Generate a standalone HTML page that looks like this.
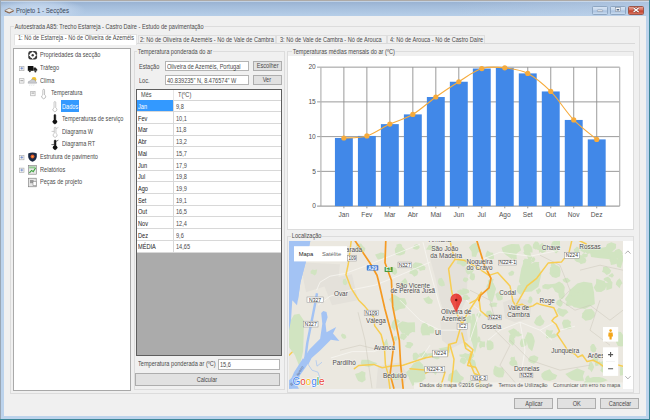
<!DOCTYPE html>
<html><head><meta charset="utf-8">
<style>
*{box-sizing:border-box;margin:0;padding:0}
html,body{width:650px;height:420px;overflow:hidden}
body{position:relative;background:#bcd3ec;font-family:"Liberation Sans",sans-serif;font-size:5.6px;color:#4a4a4a}
.a{position:absolute}
.t{position:absolute;white-space:nowrap;line-height:6px;height:6px;font-size:6.5px;transform:scaleX(.862);transform-origin:0 50%}
.frame-top{left:0;top:0;width:650px;height:16px;background:radial-gradient(48px 11px at 38px 10px,rgba(200,218,240,.95),rgba(200,218,240,.6) 60%,rgba(200,218,240,0)),linear-gradient(90deg,rgba(190,210,234,0) 70%,rgba(190,210,234,.55) 100%),linear-gradient(#94aece,#a4bddb 40%,#b6cee8)}
.client{left:4px;top:16px;width:642px;height:400px;background:#f0f0f0}
.cbtn{position:absolute;top:5.5px;height:9px;border:1px solid #8ea6c2;border-radius:1.5px;background:linear-gradient(#d7e4f3,#c4d6ec 45%,#a9c1df 55%,#c9dbef)}
.close{background:linear-gradient(#e8a08f,#d66a58 45%,#c2412c 55%,#d9735f);border-color:#9b5649}
.gb{position:absolute;border:1px solid #dcdcdc}
.gbt{position:absolute;white-space:nowrap;line-height:6px;height:6px;background:#f0f0f0;padding:0 1px;font-size:6.5px;transform:scaleX(.862);transform-origin:0 50%}
.tb{position:absolute;background:#fff;border:1px solid #b4b4b4}
.btn{position:absolute;background:#e1e1e1;border:1px solid #adadad;display:flex;align-items:center;justify-content:center;white-space:nowrap}
.btn span{display:block;font-size:6.5px;line-height:6px;height:6px;transform:scaleX(.862);position:relative;top:0.4px}
</style></head>
<body>
<!-- frame -->
<div class="a frame-top"></div>
<div class="a" style="left:0;top:0;width:650px;height:1px;background:#aeaaa6"></div>
<div class="a" style="left:1px;top:1px;width:648px;height:1px;background:rgba(225,235,245,.55)"></div>
<div class="a" style="left:0;top:0;width:1px;height:420px;background:#9aa7b5"></div>
<div class="a" style="left:649px;top:0;width:1px;height:420px;background:#3b8596"></div>
<div class="a" style="left:0;top:419px;width:650px;height:1px;background:#3b8596"></div>
<div class="a client"></div>

<!-- title -->
<svg class="a" style="left:4px;top:7px" width="11" height="8" viewBox="4 7 11 8">
  <path d="M4.8 10.4 L9.2 8.2 L13.6 10.4 L13.6 11.6 L9.2 13.6 L4.8 11.6Z" fill="#8a5530"/>
  <path d="M4.8 10.4 L9.2 8.2 L13.6 10.4 L9.2 12.5Z" fill="#e9e6e2" stroke="#6f6a66" stroke-width="0.45"/>
</svg>
<div class="t" style="left:15.5px;top:7.8px;font-size:7.05px;color:#3a4759">Projeto 1 - Secções</div>
<div class="cbtn" style="left:591.7px;width:16.4px"></div>
<div class="cbtn" style="left:610px;width:16px"></div>
<div class="cbtn close" style="left:627.9px;width:16.4px"></div>
<svg class="a" style="left:590px;top:4px" width="56" height="12" viewBox="590 4 56 12">
 <rect x="597.3" y="9.9" width="5.4" height="1.7" rx="0.5" fill="#f4f4f4" stroke="#6e7f94" stroke-width="0.5"/>
 <rect x="615.3" y="7.6" width="5.2" height="4" fill="#f4f4f4" stroke="#6e7f94" stroke-width="0.5"/>
 <rect x="616.6" y="9" width="2.6" height="1.5" fill="#4f6a8c"/>
 <path d="M633.6 7.9 L638.6 12.1 M638.6 7.9 L633.6 12.1" stroke="#7a3a30" stroke-width="2.2"/>
 <path d="M633.6 7.9 L638.6 12.1 M638.6 7.9 L633.6 12.1" stroke="#fff" stroke-width="1.3"/>
</svg>

<!-- outer group -->
<div class="gb" style="left:10.3px;top:26px;width:629.7px;height:367.9px"></div>
<div class="gbt" style="left:14.4px;top:23.5px">Autoestrada A85: Trecho Estarreja - Castro Daire - Estudo de pavimentação</div>

<!-- tabs -->
<div class="a" style="left:14px;top:43.1px;width:620.8px;height:1px;background:#d9d9d9"></div>
<div class="a" style="left:137.8px;top:34.5px;width:138.5px;height:8.8px;border:1px solid #dedede;border-bottom:none;background:#f0f0f0"></div>
<div class="a" style="left:276.3px;top:34.5px;width:110.7px;height:8.8px;border:1px solid #dedede;border-bottom:none;background:#f0f0f0"></div>
<div class="a" style="left:387px;top:34.5px;width:98.3px;height:8.8px;border:1px solid #dedede;border-bottom:none;background:#f0f0f0"></div>
<div class="a" style="left:13.9px;top:33.5px;width:123.3px;height:11.2px;border:1px solid #e4e4e4;border-bottom:none;background:#fff"></div>
<div class="t" style="left:18.2px;top:35.4px">1: Nó de Estarreja - Nó de Oliveira de Azeméis</div>
<div class="t" style="left:139.8px;top:36.6px">2: Nó de Oliveira de Azeméis - Nó de Vale de Cambra</div>
<div class="t" style="left:280px;top:36.6px">3: Nó de Vale de Cambra - Nó de Arouca</div>
<div class="t" style="left:389.7px;top:36.6px">4: Nó de Arouca - Nó de Castro Daire</div>

<!-- tree -->
<div class="a" style="left:13.1px;top:47.7px;width:117.7px;height:343.2px;background:#fff;border:1px solid #a9a9a9"></div>
<!-- tree items -->
<svg class="a" style="left:0;top:0" width="131" height="200" viewBox="0 0 131 200">
 <defs>
  <g id="exp"><rect x="0.5" y="0.5" width="4.4" height="4.4" fill="#f4f4f4" stroke="#a8a8a8" stroke-width="0.6"/></g>
 </defs>
 <!-- gear -->
 <rect x="28.3" y="51" width="8.8" height="8.5" rx="2.3" fill="#3a3a3a"/>
 <circle cx="32.7" cy="55.25" r="2.9" fill="#fff"/>
 <circle cx="32.7" cy="55.25" r="1.2" fill="#3a3a3a"/>
 <g fill="#fff"><rect x="32.1" y="51.6" width="1.2" height="1.5"/><rect x="32.1" y="57.4" width="1.2" height="1.5"/><rect x="29" y="54.65" width="1.5" height="1.2"/><rect x="34.9" y="54.65" width="1.5" height="1.2"/></g>
 <!-- Trafego -->
 <use href="#exp" x="19.1" y="65.8"/>
 <path d="M20.4 68.3h2.8M21.8 66.9v2.8" stroke="#4a6bbf" stroke-width="0.6"/>
 <rect x="27.8" y="66" width="5.6" height="4.8" fill="#111"/>
 <path d="M33.4 67.6h2.2l1.6 2v1.2h-3.8z" fill="#222"/>
 <circle cx="29.8" cy="71.2" r="1" fill="#333"/><circle cx="35.4" cy="71.4" r="1" fill="#333"/>
 <!-- Clima -->
 <use href="#exp" x="19.1" y="78.2"/>
 <path d="M20.4 80.7h2.8" stroke="#6a6a6a" stroke-width="0.6"/>
 <circle cx="34" cy="79.5" r="2.4" fill="#f2c22e"/>
 <path d="M28 83.2q0-2.4 2.4-2.4q0.8-2 3-1.4q2.4 0.2 2.4 2.4q1.2 0.4 0.8 1.4z" fill="#c9cbd0" stroke="#8c8e93" stroke-width="0.4"/>
 <path d="M30 84.5l-0.3 1M32 84.5l-0.3 1M34 84.5l-0.3 1" stroke="#9aa" stroke-width="0.4"/>
 <!-- Temperatura -->
 <use href="#exp" x="30.2" y="90.9"/>
 <path d="M31.5 93.1h2.8" stroke="#6a6a6a" stroke-width="0.6"/>
 <path d="M42.85 90.15 a0.85 0.85 0 0 1 1.7 0 V94.80 a2 2 0 1 1 -1.7 0 Z" fill="#fff" stroke="#8c8c8c" stroke-width="0.55"/>
 <path d="M54.05 102.45 a0.85 0.85 0 0 1 1.7 0 V107.80 a2 2 0 1 1 -1.7 0 Z" fill="#fff" stroke="#9a9a9a" stroke-width="0.55"/>
 <path d="M54.05 115.25 a0.85 0.85 0 0 1 1.7 0 V120.00 a2 2 0 1 1 -1.7 0 Z" fill="#111" stroke="#111" stroke-width="0.55"/>
 <path d="M54.25 128.05 a0.85 0.85 0 0 1 1.7 0 V133.40 a2 2 0 1 1 -1.7 0 Z" fill="#fff" stroke="#9a9a9a" stroke-width="0.55"/>
 <path d="M51.6 131.4h2.6M56 128.6l2.4-1.2" stroke="#9a9a9a" stroke-width="0.5"/>
 <path d="M54.25 140.85 a0.85 0.85 0 0 1 1.7 0 V145.80 a2 2 0 1 1 -1.7 0 Z" fill="#111" stroke="#111" stroke-width="0.55"/>
 <path d="M51.4 144.6h2.8M56 141.4l2.4-1.2" stroke="#111" stroke-width="0.6"/>
 <!-- Estrutura -->
 <use href="#exp" x="19.1" y="154.9"/>
 <path d="M20.4 157.4h2.8M21.8 156v2.8" stroke="#4a6bbf" stroke-width="0.6"/>
 <path d="M28.2 153.4q4.3-1.6 8.6 0v3.6q-0.6 3.4-4.3 4.8q-3.7-1.4-4.3-4.8z" fill="#1b2a44"/>
 <circle cx="32.5" cy="156.6" r="2" fill="#e0542e"/><circle cx="32.5" cy="156.6" r="0.9" fill="#f7b23b"/>
 <!-- Relatorios -->
 <use href="#exp" x="19.1" y="167.6"/>
 <path d="M20.4 170.1h2.8M21.8 168.7v2.8" stroke="#4a6bbf" stroke-width="0.6"/>
 <rect x="28.4" y="165.4" width="8" height="8.8" fill="#e8e8e8" stroke="#7a7a7a" stroke-width="0.6"/>
 <path d="M29.4 172.8l2.2-2.4 1.6 1.2 2.4-3.6" stroke="#3ca33c" stroke-width="1.1" fill="none"/>
 <rect x="29.2" y="166.4" width="6.4" height="2" fill="#58b158" opacity="0.6"/>
 <!-- Pecas -->
 <rect x="28.6" y="178.2" width="7.6" height="8.6" fill="#e4e4e4" stroke="#777" stroke-width="0.6"/>
 <rect x="30" y="180" width="3.6" height="3.2" fill="#9a9a9a"/>
 <path d="M33 181.5h3.4v4h-3.4z" fill="#fff" stroke="#777" stroke-width="0.5"/>
</svg>
<div class="a" style="left:60.9px;top:100px;width:18.4px;height:12.2px;background:#3399ff"></div>
<div class="t" style="left:39.9px;top:52.3px">Propriedades da secção</div>
<div class="t" style="left:39.9px;top:64.8px">Tráfego</div>
<div class="t" style="left:39.9px;top:77.5px">Clima</div>
<div class="t" style="left:51.3px;top:90.1px">Temperatura</div>
<div class="t" style="left:62.2px;top:103.9px;color:#fff">Dados</div>
<div class="t" style="left:62.2px;top:116.1px">Temperaturas de serviço</div>
<div class="t" style="left:62.2px;top:128.6px">Diagrama W</div>
<div class="t" style="left:62.2px;top:141.3px">Diagrama RT</div>
<div class="t" style="left:39.7px;top:154.2px">Estrutura de pavimento</div>
<div class="t" style="left:39.7px;top:166.9px">Relatórios</div>
<div class="t" style="left:39.7px;top:179.4px">Peças de projeto</div>


<!-- left group -->
<div class="gb" style="left:133.7px;top:51.2px;width:151.3px;height:338.6px"></div>
<div class="gbt" style="left:137px;top:49.1px">Temperatura ponderada do ar</div>
<div class="t" style="left:138.7px;top:64px">Estação</div>
<div class="tb" style="left:164.9px;top:61.1px;width:84px;height:10.3px"></div>
<div class="t" style="left:166.6px;top:64px">Oliveira de Azeméis, Portugal</div>
<div class="btn" style="left:252.9px;top:61.1px;width:28.8px;height:9.6px"><span>Escolher</span></div>
<div class="t" style="left:138.7px;top:78.1px">Loc.</div>
<div class="tb" style="left:164.9px;top:75px;width:84px;height:10.4px"></div>
<div class="t" style="left:166.6px;top:78px">40.839235" N, 8.476574" W</div>
<div class="btn" style="left:252.9px;top:75.4px;width:28.8px;height:9.3px"><span>Ver</span></div>
<div class="a" style="left:136.0px;top:89.2px;width:145.7px;height:266.7px;background:#ababab;border:1px solid #5e5e5e"></div>
<div class="a" style="left:137.0px;top:90.2px;width:143.7px;height:162.1px;background:#fff"></div>
<div class="a" style="left:137.0px;top:99.6px;width:143.7px;height:0.8px;background:#d5d5d5"></div>
<div class="a" style="left:173.3px;top:90.2px;width:0.8px;height:9.4px;background:#e6e6e6"></div>
<div class="t" style="left:141.3px;top:92.1px">Mês</div>
<div class="t" style="left:178px;top:92.1px">T(ºC)</div>
<div class="a" style="left:137.0px;top:100.20px;width:36.4px;height:10.90px;background:#3399ff"></div>
<div class="a" style="left:137.0px;top:111.10px;width:143.7px;height:0.8px;background:#d8d8d8"></div>
<div class="t" style="left:138.3px;top:104.00px;color:#fff">Jan</div>
<div class="t" style="left:175.8px;top:104.00px">9,8</div>
<div class="a" style="left:137.0px;top:122.80px;width:143.7px;height:0.8px;background:#d8d8d8"></div>
<div class="t" style="left:138.3px;top:115.70px;color:#1a1a1a">Fev</div>
<div class="t" style="left:175.8px;top:115.70px">10,1</div>
<div class="a" style="left:137.0px;top:134.50px;width:143.7px;height:0.8px;background:#d8d8d8"></div>
<div class="t" style="left:138.3px;top:127.40px;color:#1a1a1a">Mar</div>
<div class="t" style="left:175.8px;top:127.40px">11,8</div>
<div class="a" style="left:137.0px;top:146.20px;width:143.7px;height:0.8px;background:#d8d8d8"></div>
<div class="t" style="left:138.3px;top:139.10px;color:#1a1a1a">Abr</div>
<div class="t" style="left:175.8px;top:139.10px">13,2</div>
<div class="a" style="left:137.0px;top:157.90px;width:143.7px;height:0.8px;background:#d8d8d8"></div>
<div class="t" style="left:138.3px;top:150.80px;color:#1a1a1a">Mai</div>
<div class="t" style="left:175.8px;top:150.80px">15,7</div>
<div class="a" style="left:137.0px;top:169.60px;width:143.7px;height:0.8px;background:#d8d8d8"></div>
<div class="t" style="left:138.3px;top:162.50px;color:#1a1a1a">Jun</div>
<div class="t" style="left:175.8px;top:162.50px">17,9</div>
<div class="a" style="left:137.0px;top:181.30px;width:143.7px;height:0.8px;background:#d8d8d8"></div>
<div class="t" style="left:138.3px;top:174.20px;color:#1a1a1a">Jul</div>
<div class="t" style="left:175.8px;top:174.20px">19,8</div>
<div class="a" style="left:137.0px;top:193.00px;width:143.7px;height:0.8px;background:#d8d8d8"></div>
<div class="t" style="left:138.3px;top:185.90px;color:#1a1a1a">Ago</div>
<div class="t" style="left:175.8px;top:185.90px">19,9</div>
<div class="a" style="left:137.0px;top:204.70px;width:143.7px;height:0.8px;background:#d8d8d8"></div>
<div class="t" style="left:138.3px;top:197.60px;color:#1a1a1a">Set</div>
<div class="t" style="left:175.8px;top:197.60px">19,1</div>
<div class="a" style="left:137.0px;top:216.40px;width:143.7px;height:0.8px;background:#d8d8d8"></div>
<div class="t" style="left:138.3px;top:209.30px;color:#1a1a1a">Out</div>
<div class="t" style="left:175.8px;top:209.30px">16,5</div>
<div class="a" style="left:137.0px;top:228.10px;width:143.7px;height:0.8px;background:#d8d8d8"></div>
<div class="t" style="left:138.3px;top:221.00px;color:#1a1a1a">Nov</div>
<div class="t" style="left:175.8px;top:221.00px">12,4</div>
<div class="a" style="left:137.0px;top:239.80px;width:143.7px;height:0.8px;background:#d8d8d8"></div>
<div class="t" style="left:138.3px;top:232.70px;color:#1a1a1a">Dez</div>
<div class="t" style="left:175.8px;top:232.70px">9,6</div>
<div class="a" style="left:137.0px;top:251.50px;width:143.7px;height:0.8px;background:#d8d8d8"></div>
<div class="t" style="left:138.3px;top:244.40px;color:#1a1a1a">MÉDIA</div>
<div class="t" style="left:175.8px;top:244.40px">14,65</div>
<div class="a" style="left:173.3px;top:100.2px;width:0.8px;height:152.1px;background:#d8d8d8"></div><div class="t" style="left:137.7px;top:361.3px">Temperatura ponderada ar (ºC)</div>
<div class="tb" style="left:218.3px;top:359.3px;width:61.8px;height:10.4px"></div>
<div class="t" style="left:220.1px;top:361.6px">15,6</div>
<div class="btn" style="left:135.1px;top:373.1px;width:144.6px;height:12.6px;line-height:11px"><span>Calcular</span></div>


<!-- chart group -->
<div class="gb" style="left:287px;top:51.2px;width:346.9px;height:178.4px"></div>
<div class="gbt" style="left:291.5px;top:49.1px">Temperaturas médias mensais do ar (ºC)</div>
<div class="a" style="left:288.2px;top:56px;height:172.6px;background:#fff;width:344.7px"></div>
<svg class="a" style="left:288px;top:56px" width="345" height="173" viewBox="288 56 345 173">
<line x1="343.88" y1="67.15" x2="343.88" y2="208.30" stroke="#8e8e8e" stroke-width="0.9"/>
<line x1="366.87" y1="67.15" x2="366.87" y2="208.30" stroke="#8e8e8e" stroke-width="0.9"/>
<line x1="389.85" y1="67.15" x2="389.85" y2="208.30" stroke="#8e8e8e" stroke-width="0.9"/>
<line x1="412.84" y1="67.15" x2="412.84" y2="208.30" stroke="#8e8e8e" stroke-width="0.9"/>
<line x1="435.82" y1="67.15" x2="435.82" y2="208.30" stroke="#8e8e8e" stroke-width="0.9"/>
<line x1="458.81" y1="67.15" x2="458.81" y2="208.30" stroke="#8e8e8e" stroke-width="0.9"/>
<line x1="481.79" y1="67.15" x2="481.79" y2="208.30" stroke="#8e8e8e" stroke-width="0.9"/>
<line x1="504.78" y1="67.15" x2="504.78" y2="208.30" stroke="#8e8e8e" stroke-width="0.9"/>
<line x1="527.76" y1="67.15" x2="527.76" y2="208.30" stroke="#8e8e8e" stroke-width="0.9"/>
<line x1="550.75" y1="67.15" x2="550.75" y2="208.30" stroke="#8e8e8e" stroke-width="0.9"/>
<line x1="573.73" y1="67.15" x2="573.73" y2="208.30" stroke="#8e8e8e" stroke-width="0.9"/>
<line x1="596.72" y1="67.15" x2="596.72" y2="208.30" stroke="#8e8e8e" stroke-width="0.9"/>
<line x1="317.1" y1="171.36" x2="619.7" y2="171.36" stroke="#8e8e8e" stroke-width="0.9"/>
<line x1="317.1" y1="136.62" x2="619.7" y2="136.62" stroke="#8e8e8e" stroke-width="0.9"/>
<line x1="317.1" y1="101.89" x2="619.7" y2="101.89" stroke="#8e8e8e" stroke-width="0.9"/>
<line x1="317.1" y1="67.15" x2="619.7" y2="67.15" stroke="#8e8e8e" stroke-width="0.9"/>
<line x1="320.90" y1="67.15" x2="320.90" y2="206.10" stroke="#b4b4b4" stroke-width="1.2"/>
<line x1="619.70" y1="67.15" x2="619.70" y2="206.10" stroke="#b4b4b4" stroke-width="1.2"/>
<line x1="317.1" y1="206.10" x2="619.7" y2="206.10" stroke="#a0a0a0" stroke-width="1.1"/>
<rect x="334.93" y="138.01" width="17.9" height="68.09" fill="#4188e8"/>
<rect x="357.92" y="135.93" width="17.9" height="70.17" fill="#4188e8"/>
<rect x="380.90" y="124.12" width="17.9" height="81.98" fill="#4188e8"/>
<rect x="403.89" y="114.39" width="17.9" height="91.71" fill="#4188e8"/>
<rect x="426.87" y="97.02" width="17.9" height="109.08" fill="#4188e8"/>
<rect x="449.86" y="81.74" width="17.9" height="124.36" fill="#4188e8"/>
<rect x="472.84" y="68.54" width="17.9" height="137.56" fill="#4188e8"/>
<rect x="495.83" y="67.84" width="17.9" height="138.26" fill="#4188e8"/>
<rect x="518.81" y="73.40" width="17.9" height="132.70" fill="#4188e8"/>
<rect x="541.80" y="91.47" width="17.9" height="114.63" fill="#4188e8"/>
<rect x="564.78" y="119.95" width="17.9" height="86.15" fill="#4188e8"/>
<rect x="587.77" y="139.40" width="17.9" height="66.70" fill="#4188e8"/>
<path d="M343.88,138.01 C347.72,137.67 359.21,138.25 366.87,135.93 C374.53,133.61 382.19,127.71 389.85,124.12 C397.52,120.53 405.18,118.91 412.84,114.39 C420.50,109.88 428.16,102.47 435.82,97.02 C443.48,91.58 451.15,86.49 458.81,81.74 C466.47,76.99 474.13,70.86 481.79,68.54 C489.45,66.22 497.12,67.03 504.78,67.84 C512.44,68.66 520.10,69.47 527.76,73.40 C535.42,77.34 543.08,83.71 550.75,91.47 C558.41,99.22 566.07,111.96 573.73,119.95 C581.39,127.94 592.88,136.16 596.72,139.40" fill="none" stroke="#f6ab3c" stroke-width="1.1"/>
<circle cx="343.88" cy="138.01" r="2.6" fill="#f6ab3c"/>
<circle cx="366.87" cy="135.93" r="2.6" fill="#f6ab3c"/>
<circle cx="389.85" cy="124.12" r="2.6" fill="#f6ab3c"/>
<circle cx="412.84" cy="114.39" r="2.6" fill="#f6ab3c"/>
<circle cx="435.82" cy="97.02" r="2.6" fill="#f6ab3c"/>
<circle cx="458.81" cy="81.74" r="2.6" fill="#f6ab3c"/>
<circle cx="481.79" cy="68.54" r="2.6" fill="#f6ab3c"/>
<circle cx="504.78" cy="67.84" r="2.6" fill="#f6ab3c"/>
<circle cx="527.76" cy="73.40" r="2.6" fill="#f6ab3c"/>
<circle cx="550.75" cy="91.47" r="2.6" fill="#f6ab3c"/>
<circle cx="573.73" cy="119.95" r="2.6" fill="#f6ab3c"/>
<circle cx="596.72" cy="139.40" r="2.6" fill="#f6ab3c"/>
<text x="315.8" y="208.30" text-anchor="end" font-size="6.6" fill="#505050">0</text>
<text x="315.8" y="173.56" text-anchor="end" font-size="6.6" fill="#505050">5</text>
<text x="315.8" y="138.82" text-anchor="end" font-size="6.6" fill="#505050">10</text>
<text x="315.8" y="104.09" text-anchor="end" font-size="6.6" fill="#505050">15</text>
<text x="315.8" y="69.35" text-anchor="end" font-size="6.6" fill="#505050">20</text>
<text x="343.88" y="217.3" text-anchor="middle" font-size="6.6" fill="#505050">Jan</text>
<text x="366.87" y="217.3" text-anchor="middle" font-size="6.6" fill="#505050">Fev</text>
<text x="389.85" y="217.3" text-anchor="middle" font-size="6.6" fill="#505050">Mar</text>
<text x="412.84" y="217.3" text-anchor="middle" font-size="6.6" fill="#505050">Abr</text>
<text x="435.82" y="217.3" text-anchor="middle" font-size="6.6" fill="#505050">Mai</text>
<text x="458.81" y="217.3" text-anchor="middle" font-size="6.6" fill="#505050">Jun</text>
<text x="481.79" y="217.3" text-anchor="middle" font-size="6.6" fill="#505050">Jul</text>
<text x="504.78" y="217.3" text-anchor="middle" font-size="6.6" fill="#505050">Ago</text>
<text x="527.76" y="217.3" text-anchor="middle" font-size="6.6" fill="#505050">Set</text>
<text x="550.75" y="217.3" text-anchor="middle" font-size="6.6" fill="#505050">Out</text>
<text x="573.73" y="217.3" text-anchor="middle" font-size="6.6" fill="#505050">Nov</text>
<text x="596.72" y="217.3" text-anchor="middle" font-size="6.6" fill="#505050">Dez</text>
</svg>

<!-- map group -->
<div class="gb" style="left:287px;top:235.6px;width:346.9px;height:157px"></div>
<div class="gbt" style="left:291px;top:232.6px">Localização</div>
<div class="a" style="left:288.6px;top:240.8px;width:344.4px;height:148px;background:#fff"></div>
<svg class="a" style="left:289px;top:240.8px" width="334.3" height="147.8" viewBox="289 240.8 334.3 147.8">
<rect x="289" y="240" width="335" height="150" fill="#ebe8e0"/>
<g fill="#e4e1da">
<path d="M430 258 L462 256 L468 275 L466 300 L460 312 L446 318 L440 300 L436 280 Z"/>
<path d="M322 280 L352 274 L358 300 L332 305 Z"/>
<path d="M300 262 L340 264 L338 282 L306 292 Z"/>
<path d="M503 302 L514 298 L532 300 L530 318 L515 322 L505 318 Z"/>
<path d="M378 366 L400 362 L408 375 L402 388 L376 388 Z"/>
<path d="M440 320 L466 322 L468 340 L452 348 L442 340 Z"/>
</g>
<g fill="#d1e4c1">
<path d="M303.6 337.0 L303.1 351.0 L299.6 366.7 L294.8 354.9 L289.2 347.4 L288.0 325.1 L294.0 314.6 L299.3 313.5 L304.0 320.5Z"/>
<path d="M405.8 250.0 L404.5 253.8 L400.1 255.3 L395.7 254.8 L395.0 251.2 L394.8 248.7 L396.5 246.4 L400.2 244.2 L403.0 247.2Z"/>
<path d="M423.2 266.0 L420.5 267.7 L418.6 268.7 L415.9 268.9 L412.7 267.5 L412.7 264.4 L415.2 262.1 L418.7 262.6 L421.9 263.4Z"/>
<path d="M406.8 303.0 L405.0 308.0 L400.0 308.8 L393.9 311.8 L393.1 305.2 L389.0 299.3 L393.8 294.0 L399.9 297.8 L405.0 298.0Z"/>
<path d="M432.9 300.0 L432.1 303.4 L428.7 303.8 L426.3 302.9 L425.0 301.1 L423.1 298.2 L426.4 297.2 L428.7 295.8 L430.3 298.1Z"/>
<path d="M415.1 327.0 L415.1 332.1 L408.0 331.4 L402.1 333.4 L399.4 329.1 L397.4 324.4 L402.4 321.1 L408.1 322.2 L414.8 322.1Z"/>
<path d="M425.9 373.0 L421.6 379.4 L418.0 382.6 L412.5 385.9 L408.8 378.0 L409.7 368.6 L413.6 363.3 L418.4 359.8 L423.0 364.6Z"/>
<path d="M481.2 250.0 L477.5 252.5 L476.0 256.9 L471.9 256.4 L471.6 251.5 L468.9 247.3 L472.1 244.0 L476.1 242.4 L478.3 246.7Z"/>
<path d="M495.6 289.0 L494.5 294.9 L492.2 302.3 L488.3 298.2 L486.8 292.1 L486.5 285.8 L488.9 281.7 L491.6 282.3 L493.8 284.4Z"/>
<path d="M521.1 250.0 L515.9 253.8 L512.0 259.0 L506.3 255.0 L502.9 252.0 L501.5 247.6 L506.5 245.3 L511.4 243.7 L519.1 244.1Z"/>
<path d="M541.4 274.0 L538.4 286.5 L531.7 291.2 L524.2 291.9 L518.9 281.2 L521.3 268.3 L524.8 258.0 L531.1 263.2 L538.0 262.0Z"/>
<path d="M564.8 287.0 L564.3 291.5 L559.3 293.5 L555.0 291.4 L553.5 288.4 L549.5 284.3 L555.4 283.2 L559.2 281.2 L562.8 283.6Z"/>
<path d="M477.4 330.0 L477.6 343.5 L474.9 353.6 L472.3 343.0 L469.8 336.8 L470.8 324.7 L471.9 313.8 L474.6 313.6 L476.4 321.1Z"/>
<path d="M534.8 341.0 L534.0 345.1 L532.1 351.1 L528.5 347.9 L527.2 343.2 L525.0 337.5 L527.6 331.7 L531.8 333.4 L533.9 337.2Z"/>
<path d="M537.7 360.0 L536.3 361.8 L533.9 363.5 L530.9 362.5 L528.4 361.1 L528.3 358.9 L529.9 356.4 L534.3 355.0 L538.4 357.0Z"/>
<path d="M544.6 321.0 L543.3 324.0 L540.1 326.0 L536.3 325.0 L534.0 322.5 L535.1 319.8 L536.5 317.3 L540.4 314.5 L542.4 318.6Z"/>
<path d="M560.0 246.0 L559.2 250.2 L556.1 253.4 L553.0 250.2 L551.1 247.7 L551.1 244.3 L552.7 241.2 L555.8 240.3 L560.0 240.9Z"/>
<path d="M618.9 254.0 L615.6 259.7 L605.4 258.6 L600.0 258.1 L591.1 256.7 L589.6 250.9 L598.1 248.1 L606.2 246.7 L610.0 251.1Z"/>
<path d="M594.0 292.0 L594.9 303.7 L584.8 308.9 L573.9 307.1 L565.7 298.4 L571.9 288.1 L577.3 283.2 L583.7 281.5 L592.1 282.9Z"/>
<path d="M560.6 271.0 L560.0 276.0 L556.0 277.8 L552.2 276.7 L549.4 273.4 L550.4 269.0 L552.4 265.6 L555.6 267.0 L559.6 266.4Z"/>
<path d="M444.3 282.0 L445.0 285.3 L441.8 286.3 L439.3 285.0 L438.2 283.0 L437.9 280.9 L438.8 278.2 L441.8 277.5 L443.2 280.1Z"/>
<path d="M365.2 376.0 L365.7 379.9 L362.1 382.3 L358.2 380.8 L356.5 377.7 L355.0 373.8 L359.0 372.6 L361.9 370.9 L365.5 372.2Z"/>
<path d="M377.6 363.0 L373.7 365.1 L368.8 366.7 L363.1 365.6 L360.9 363.8 L360.8 362.2 L361.7 359.6 L368.6 359.6 L372.3 361.3Z"/>
<path d="M346.0 336.0 L346.3 337.6 L344.6 338.8 L342.6 338.0 L341.7 336.7 L340.9 335.0 L342.1 333.2 L344.4 334.0 L345.5 334.9Z"/>
<path d="M316.7 272.0 L316.2 273.8 L314.6 275.3 L312.8 274.0 L310.6 273.2 L310.7 270.8 L312.5 269.4 L314.4 269.7 L317.1 269.4Z"/>
<path d="M329.3 252.0 L329.7 254.4 L325.7 254.4 L323.0 254.1 L319.4 253.2 L321.0 251.1 L321.7 248.6 L325.9 249.1 L328.0 250.5Z"/>
<path d="M388.4 345.0 L388.2 348.0 L386.6 350.5 L384.0 350.7 L383.9 346.3 L383.4 343.4 L384.8 341.5 L386.7 338.4 L387.7 342.6Z"/>
<path d="M594.8 315.0 L593.7 317.2 L591.1 319.6 L585.5 320.5 L581.7 317.2 L582.4 313.0 L585.3 309.2 L591.6 308.6 L594.7 312.2Z"/>
<path d="M612.5 364.0 L614.0 368.2 L608.4 369.8 L604.6 366.9 L599.7 365.9 L601.0 362.4 L603.8 360.1 L608.1 359.7 L611.1 361.5Z"/>
<path d="M449.9 350.0 L449.9 352.2 L446.9 353.5 L442.0 354.6 L441.8 351.0 L438.5 348.2 L443.6 347.2 L446.9 346.5 L451.6 346.9Z"/>
<path d="M384.9 256.0 L382.9 258.4 L380.5 258.7 L378.0 259.4 L376.6 257.2 L375.1 254.2 L378.4 253.3 L380.6 252.4 L383.9 252.7Z"/>
<path d="M407.4 283.0 L407.6 285.4 L405.1 287.8 L401.0 287.1 L400.8 283.9 L400.8 282.1 L402.3 280.6 L405.1 277.9 L407.2 280.9Z"/>
<path d="M462.0 377.0 L460.9 382.8 L455.9 383.1 L452.5 382.1 L447.6 380.2 L448.9 374.4 L452.5 371.9 L456.2 369.1 L459.0 373.1Z"/>
<path d="M474.2 356.0 L472.5 357.7 L471.0 360.6 L466.8 360.5 L464.9 357.5 L463.8 354.2 L468.3 353.7 L470.7 352.8 L473.8 353.5Z"/>
<path d="M504.6 372.0 L503.0 377.1 L498.8 377.4 L495.9 376.3 L493.5 374.0 L493.3 370.0 L494.8 365.2 L498.7 367.4 L502.6 367.3Z"/>
<path d="M557.3 375.0 L555.5 378.9 L549.7 380.9 L543.7 379.7 L541.4 376.5 L541.4 373.5 L544.4 371.1 L549.7 369.1 L552.3 372.7Z"/>
<path d="M582.9 376.0 L584.0 380.5 L576.4 380.9 L571.5 379.6 L568.7 377.4 L565.3 373.9 L570.6 371.4 L577.3 368.1 L584.7 371.1Z"/>
<path d="M607.7 380.0 L602.1 382.1 L598.0 382.8 L594.1 382.5 L589.5 381.4 L588.4 378.4 L593.1 376.7 L598.1 376.8 L602.8 377.6Z"/>
<path d="M606.5 285.0 L605.2 289.3 L601.2 291.9 L596.3 291.5 L593.7 287.3 L595.9 283.5 L596.3 278.6 L600.9 279.9 L604.8 281.0Z"/>
<path d="M624.6 340.0 L624.5 346.0 L620.7 346.2 L617.9 345.7 L616.1 342.2 L616.4 337.9 L616.8 331.2 L620.9 331.7 L623.4 335.5Z"/>
<path d="M493.7 255.0 L494.1 258.5 L490.7 259.0 L488.4 257.8 L485.4 256.7 L485.8 253.5 L487.3 250.3 L490.5 252.2 L493.0 252.5Z"/>
<path d="M547.1 248.0 L545.7 251.2 L542.1 253.1 L539.3 250.3 L537.0 249.2 L537.6 247.0 L539.0 245.3 L542.2 242.8 L545.1 245.3Z"/>
<path d="M568.5 312.0 L565.5 314.3 L563.1 316.9 L559.6 315.3 L558.1 313.1 L556.4 310.4 L558.7 307.5 L562.6 309.1 L566.1 309.3Z"/>
<path d="M524.3 290.0 L522.5 292.6 L520.6 294.5 L518.5 293.2 L517.0 291.4 L516.9 288.6 L517.9 285.4 L520.8 284.6 L522.4 287.5Z"/>
<path d="M514.6 340.0 L514.7 342.8 L512.8 345.5 L510.4 343.4 L508.7 341.5 L509.0 338.6 L509.6 334.8 L512.7 334.9 L514.1 337.8Z"/>
<path d="M493.6 345.0 L493.5 348.0 L490.9 350.1 L487.3 349.8 L486.6 346.2 L486.4 343.7 L487.2 340.1 L490.8 340.4 L493.2 342.3Z"/>
<path d="M429.3 330.0 L430.0 335.1 L425.8 335.1 L422.4 335.4 L420.8 331.8 L420.6 328.1 L421.9 323.5 L426.2 322.0 L428.5 326.5Z"/>
<path d="M435.9 248.0 L436.4 250.2 L432.7 250.3 L430.4 249.7 L426.0 249.3 L427.6 247.0 L428.9 244.8 L432.8 245.2 L436.9 245.6Z"/>
<path d="M473.9 270.0 L472.3 272.5 L470.5 273.3 L467.9 274.5 L465.9 271.9 L465.2 267.8 L468.6 266.9 L470.8 264.7 L472.8 267.1Z"/>
<path d="M616.0 248.0 L613.5 250.4 L610.9 252.2 L607.0 252.4 L602.7 250.2 L605.9 246.8 L607.0 243.7 L611.3 242.0 L616.1 243.7Z"/>
<path d="M623.2 260.0 L622.3 262.8 L620.9 267.7 L617.3 266.9 L616.3 262.0 L617.4 258.6 L617.4 253.3 L620.6 254.6 L623.9 255.1Z"/>
<path d="M365.4 248.0 L364.7 251.2 L360.7 251.0 L357.0 252.2 L356.2 249.1 L355.6 246.7 L356.9 243.7 L361.1 243.2 L363.0 246.0Z"/>
<path d="M347.4 282.0 L347.1 283.8 L345.5 285.0 L343.6 284.4 L342.9 282.8 L342.7 281.2 L343.3 279.0 L345.7 278.2 L346.6 280.7Z"/>
<path d="M477.2 322.1 L476.7 323.7 L473.6 323.5 L470.7 324.4 L470.4 322.6 L469.1 321.3 L471.1 320.1 L473.8 319.7 L475.7 320.9Z"/>
<path d="M480.4 339.3 L480.2 341.5 L478.8 342.3 L477.2 342.4 L476.4 340.3 L476.4 338.2 L477.7 337.4 L478.8 335.8 L480.1 337.2Z"/>
<path d="M467.7 344.7 L467.9 346.4 L466.4 347.3 L464.9 346.6 L464.3 345.3 L463.9 343.9 L465.1 343.3 L466.2 343.1 L467.5 343.3Z"/>
<path d="M477.3 376.1 L477.4 377.7 L476.0 378.7 L474.8 377.7 L473.2 377.1 L474.0 375.5 L474.2 373.6 L476.1 373.1 L477.4 374.5Z"/>
<path d="M483.3 385.8 L483.6 387.7 L481.3 388.5 L478.2 389.2 L478.1 386.6 L476.3 384.5 L478.2 382.3 L481.4 382.4 L484.2 383.5Z"/>
<path d="M493.0 313.7 L494.1 316.1 L490.2 316.4 L486.4 316.8 L483.9 314.9 L486.1 313.0 L486.7 310.9 L490.4 310.2 L491.8 312.5Z"/>
<path d="M471.2 319.4 L471.2 322.5 L469.0 322.5 L466.7 323.9 L466.3 320.6 L465.2 317.7 L467.5 316.8 L469.1 315.4 L471.5 316.1Z"/>
<path d="M472.6 356.5 L472.0 358.1 L470.2 359.4 L467.8 358.7 L467.0 357.2 L466.7 355.7 L468.0 354.6 L470.4 352.8 L472.9 354.4Z"/>
<path d="M481.5 315.0 L480.0 316.3 L479.1 318.0 L477.9 316.6 L476.6 315.9 L476.5 314.1 L477.7 313.1 L479.2 311.9 L480.4 313.3Z"/>
<path d="M485.1 344.2 L484.9 347.0 L482.4 346.7 L480.0 348.2 L479.0 345.5 L479.4 343.1 L480.2 340.6 L482.4 341.4 L485.0 341.2Z"/>
<path d="M428.2 355.0 L426.6 357.2 L424.5 359.4 L421.5 358.1 L420.4 356.0 L418.8 353.5 L422.1 352.8 L424.5 350.5 L426.4 353.0Z"/>
<path d="M421.2 368.7 L421.0 372.3 L418.0 373.1 L415.3 372.8 L414.4 370.0 L415.1 367.8 L416.1 366.3 L417.8 365.6 L420.3 365.8Z"/>
<path d="M436.6 354.4 L435.7 355.9 L433.0 357.3 L430.0 355.9 L428.1 355.0 L426.7 353.5 L430.2 353.1 L432.4 352.9 L435.3 353.1Z"/>
<path d="M424.3 377.9 L424.2 379.7 L422.9 380.4 L421.2 380.8 L420.1 379.0 L420.7 377.0 L421.2 374.8 L423.0 374.7 L423.9 376.3Z"/>
<path d="M416.8 373.4 L413.9 375.2 L411.7 376.0 L409.6 375.5 L406.8 374.7 L406.1 371.9 L408.6 369.9 L411.9 370.3 L413.9 371.6Z"/>
<path d="M439.0 355.7 L439.7 358.2 L437.0 359.3 L434.4 358.4 L432.0 357.0 L432.6 354.5 L433.6 351.7 L437.1 351.7 L438.8 353.8Z"/>
<path d="M413.2 331.4 L409.8 333.3 L408.2 335.8 L405.3 334.9 L403.9 332.6 L404.5 330.4 L404.7 326.9 L407.9 328.6 L411.0 328.5Z"/>
<path d="M407.1 336.6 L405.5 338.4 L404.5 339.5 L403.0 340.1 L402.2 337.9 L402.0 335.2 L402.9 332.6 L404.5 333.7 L405.7 334.5Z"/>
<path d="M413.3 344.8 L411.8 346.0 L410.4 348.2 L406.7 347.6 L404.6 345.9 L406.7 344.2 L406.6 341.9 L410.3 341.7 L412.8 343.1Z"/>
<path d="M404.0 336.7 L403.1 338.7 L401.9 339.2 L400.8 338.7 L400.0 337.6 L400.3 336.0 L400.7 334.3 L402.0 333.1 L403.4 334.4Z"/>
<path d="M397.7 322.9 L397.0 325.8 L395.4 326.2 L393.9 326.5 L393.1 324.2 L392.6 321.3 L393.9 319.5 L395.4 319.7 L396.9 320.2Z"/>
<path d="M398.1 326.2 L395.8 328.3 L394.6 331.4 L392.8 328.6 L391.4 327.4 L391.4 325.0 L392.0 322.0 L394.6 320.8 L396.7 323.0Z"/>
<path d="M425.2 375.3 L425.6 378.8 L422.6 379.0 L420.5 378.3 L417.6 377.2 L418.3 373.8 L419.9 371.2 L422.7 370.7 L425.7 371.7Z"/>
<path d="M443.3 384.9 L443.2 387.3 L441.0 388.3 L438.7 388.2 L437.9 385.9 L437.4 383.7 L439.0 382.1 L440.9 382.3 L442.2 383.3Z"/>
<path d="M434.3 385.3 L431.6 386.4 L430.1 388.4 L427.1 386.9 L425.9 385.9 L425.7 384.7 L425.8 382.7 L429.7 383.2 L431.8 384.2Z"/>
<path d="M426.2 370.3 L425.8 371.7 L424.9 373.9 L422.9 373.4 L421.5 371.6 L421.4 369.1 L423.5 368.4 L424.9 367.0 L426.3 368.5Z"/>
<path d="M437.2 371.0 L436.6 373.4 L435.2 374.9 L434.0 372.9 L432.4 372.4 L432.3 369.7 L433.4 367.6 L435.0 368.9 L436.0 369.5Z"/>
<path d="M532.0 262.0 L531.0 263.6 L529.5 266.6 L525.5 265.9 L523.5 263.4 L522.9 260.4 L525.8 258.5 L529.2 258.9 L531.1 260.3Z"/>
<path d="M538.7 263.5 L539.4 265.1 L536.3 265.2 L534.0 265.1 L532.2 264.2 L533.3 263.0 L534.1 262.0 L536.4 261.7 L539.3 261.9Z"/>
<path d="M559.2 268.4 L558.1 270.6 L556.0 273.6 L552.7 271.9 L549.6 270.1 L550.3 266.9 L553.4 266.1 L555.7 264.7 L558.4 265.9Z"/>
<path d="M532.4 257.0 L531.2 259.0 L530.1 261.0 L528.4 260.2 L527.9 258.0 L526.9 255.4 L528.8 254.8 L530.1 252.6 L531.0 255.2Z"/>
<path d="M514.8 247.0 L514.7 248.2 L513.7 249.8 L511.4 249.8 L511.5 247.6 L510.7 246.2 L511.8 244.9 L513.7 244.2 L514.7 245.8Z"/>
<path d="M529.0 246.6 L528.4 247.9 L527.4 249.5 L526.2 248.3 L524.5 247.6 L525.4 245.9 L526.2 244.9 L527.4 243.9 L528.5 245.1Z"/>
<path d="M516.6 255.9 L516.8 258.9 L515.3 258.8 L513.8 260.3 L512.9 257.5 L512.7 254.2 L513.9 252.0 L515.4 252.2 L516.6 253.4Z"/>
<path d="M543.3 249.5 L543.4 251.8 L541.0 251.5 L539.0 252.6 L539.0 250.1 L538.6 248.7 L539.6 247.4 L541.3 245.8 L542.8 247.6Z"/>
<path d="M532.4 248.7 L532.6 252.3 L528.9 252.3 L526.0 252.5 L523.8 250.3 L523.2 246.9 L525.5 244.1 L529.1 243.8 L531.3 246.1Z"/>
<path d="M535.3 259.5 L534.6 260.6 L533.8 262.3 L532.0 261.7 L530.8 260.4 L531.7 258.9 L532.2 257.6 L533.8 256.9 L535.1 258.0Z"/>
<path d="M530.4 252.9 L530.5 254.4 L528.1 255.9 L525.3 254.6 L523.8 253.6 L523.5 252.2 L524.6 250.6 L528.1 250.0 L529.7 251.8Z"/>
<path d="M513.9 273.5 L513.4 274.8 L511.7 275.6 L509.3 275.6 L508.6 274.1 L508.2 272.8 L509.8 271.9 L512.0 270.4 L514.3 271.8Z"/>
<path d="M539.7 245.8 L540.8 249.6 L537.6 249.0 L535.5 249.3 L532.6 247.8 L533.1 244.0 L535.1 241.3 L537.8 241.6 L539.3 243.6Z"/>
<path d="M556.2 265.9 L554.7 267.2 L553.6 268.2 L551.9 268.2 L551.4 266.6 L550.7 265.0 L551.5 262.8 L553.7 262.6 L555.3 264.0Z"/>
<path d="M586.4 260.4 L585.2 262.9 L583.0 263.4 L580.6 264.1 L579.4 261.7 L578.6 258.9 L580.2 256.0 L583.1 256.7 L585.4 257.8Z"/>
<path d="M595.0 249.5 L593.0 252.2 L590.5 253.0 L587.3 253.9 L584.6 251.4 L584.9 247.6 L587.3 245.1 L590.8 244.0 L593.7 246.2Z"/>
<path d="M618.3 261.1 L616.7 263.5 L614.0 264.4 L610.9 264.8 L610.4 262.1 L609.4 259.9 L610.7 257.1 L614.3 256.8 L617.1 258.4Z"/>
<path d="M587.7 255.4 L587.4 256.6 L585.7 257.3 L583.5 257.3 L582.5 256.0 L582.0 254.6 L583.2 253.0 L585.6 253.8 L587.8 253.9Z"/>
<path d="M579.6 250.6 L578.2 252.8 L576.7 254.2 L574.4 254.9 L574.5 251.5 L573.6 249.3 L575.2 248.1 L576.8 246.2 L579.0 247.5Z"/>
<path d="M622.9 253.9 L620.7 256.0 L618.9 258.6 L615.6 257.9 L612.8 255.7 L613.5 252.4 L615.4 249.7 L619.1 248.5 L621.8 251.0Z"/>
<path d="M620.5 252.3 L620.7 254.5 L618.3 254.3 L616.5 254.8 L615.7 253.1 L615.0 251.3 L617.0 250.7 L618.6 248.9 L619.8 250.8Z"/>
<path d="M586.5 249.1 L586.3 251.4 L584.5 253.0 L582.6 251.5 L580.4 250.5 L580.4 247.7 L581.6 244.9 L584.5 245.3 L586.3 246.8Z"/>
<path d="M616.0 254.6 L616.4 257.6 L613.7 259.7 L610.8 258.1 L609.8 255.7 L608.3 252.9 L611.0 251.4 L613.4 251.4 L615.1 252.7Z"/>
<path d="M584.5 258.2 L583.2 261.3 L579.7 262.5 L576.5 261.6 L574.2 259.6 L575.2 257.1 L575.7 253.7 L579.6 254.7 L582.8 255.4Z"/>
<path d="M475.1 276.5 L474.4 279.6 L472.4 280.3 L470.9 279.5 L469.5 277.9 L470.2 275.5 L470.4 272.3 L472.4 273.0 L474.4 273.3Z"/>
<path d="M469.4 291.0 L468.8 292.8 L466.0 293.5 L463.0 293.5 L461.7 291.8 L462.3 290.4 L462.5 288.0 L466.0 288.5 L468.4 289.5Z"/>
<path d="M470.0 297.6 L469.6 299.1 L467.1 299.9 L464.1 299.9 L462.1 298.5 L462.9 296.9 L463.7 294.9 L467.3 294.6 L468.6 296.5Z"/>
<path d="M467.8 261.8 L466.7 265.1 L463.0 266.5 L460.3 264.4 L456.6 263.5 L457.2 260.3 L460.5 259.5 L462.6 259.2 L466.8 258.4Z"/>
<path d="M467.8 292.2 L465.5 294.1 L463.0 294.8 L460.5 294.6 L458.6 293.2 L456.8 290.7 L460.1 289.4 L463.0 289.5 L467.2 289.2Z"/>
<path d="M468.5 279.7 L467.0 280.7 L466.1 282.2 L464.3 281.6 L462.9 280.5 L463.1 278.9 L464.1 277.4 L466.1 277.3 L467.9 278.1Z"/>
<path d="M502.5 296.0 L502.8 299.1 L500.3 300.3 L497.6 300.4 L496.4 297.4 L495.4 294.1 L497.8 292.1 L500.2 292.4 L501.9 293.7Z"/>
<path d="M496.6 304.9 L496.6 306.5 L493.7 306.6 L491.0 307.0 L490.0 305.5 L489.0 304.0 L491.0 302.7 L494.0 302.3 L497.5 302.8Z"/>
<path d="M492.8 281.7 L493.6 284.5 L491.5 285.1 L489.6 284.9 L488.2 283.0 L487.9 280.3 L489.8 279.0 L491.5 278.5 L493.8 278.8Z"/>
<path d="M492.8 286.8 L493.1 289.8 L491.6 291.4 L490.3 289.2 L488.7 288.3 L488.6 285.1 L489.6 281.9 L491.5 283.1 L493.6 283.1Z"/>
<path d="M496.0 288.3 L495.1 291.0 L493.1 293.7 L491.0 290.8 L488.2 290.0 L488.4 286.7 L490.6 285.1 L493.1 283.1 L494.8 285.8Z"/>
<path d="M562.9 302.9 L562.2 305.1 L560.2 306.8 L558.0 305.2 L556.3 304.0 L556.3 301.9 L557.6 300.0 L560.2 298.9 L561.7 301.1Z"/>
<path d="M570.7 280.5 L569.0 281.9 L567.2 282.9 L565.3 282.3 L563.5 281.3 L562.5 279.3 L564.8 278.1 L567.3 277.6 L568.9 279.1Z"/>
<path d="M532.5 300.0 L531.9 301.7 L530.7 303.3 L528.9 303.0 L527.4 301.3 L528.7 299.2 L528.8 296.8 L530.8 296.0 L532.3 297.9Z"/>
<path d="M582.8 293.9 L582.7 295.7 L581.1 296.0 L579.6 296.1 L577.1 295.4 L577.8 292.7 L579.1 290.7 L581.4 290.0 L583.7 291.2Z"/>
<path d="M571.4 299.6 L570.8 302.0 L569.3 303.3 L567.6 303.0 L566.6 300.8 L566.4 298.3 L568.0 297.3 L569.3 295.9 L570.6 297.5Z"/>
<path d="M552.5 286.9 L549.8 288.4 L548.0 289.4 L545.9 288.8 L542.6 288.3 L542.2 285.5 L545.0 283.8 L548.1 284.0 L551.4 284.3Z"/>
<path d="M575.0 299.0 L573.1 301.1 L570.0 301.5 L567.3 301.3 L565.1 300.0 L565.4 298.1 L567.1 296.4 L570.2 295.6 L574.1 296.4Z"/>
<path d="M575.3 292.6 L575.7 295.2 L573.3 295.1 L571.6 295.0 L568.8 294.2 L569.4 291.3 L570.6 288.5 L573.5 289.1 L574.7 291.1Z"/>
<path d="M564.8 293.3 L564.5 296.3 L562.4 298.9 L559.4 298.4 L558.5 294.8 L558.6 291.9 L560.4 290.6 L562.3 288.6 L563.8 291.1Z"/>
<path d="M582.6 301.9 L581.4 303.0 L579.5 303.6 L576.2 304.5 L575.6 302.6 L572.9 300.7 L577.2 300.3 L580.0 298.6 L581.7 300.7Z"/>
<path d="M572.2 303.6 L573.2 305.3 L569.8 305.5 L566.5 305.9 L565.8 304.2 L566.3 303.0 L566.5 301.2 L570.1 300.9 L573.5 301.7Z"/>
<path d="M541.1 291.1 L539.7 292.2 L538.9 293.8 L537.2 293.6 L536.5 291.9 L535.8 289.9 L537.6 289.2 L539.0 287.7 L540.5 289.1Z"/>
<path d="M551.9 333.5 L551.2 335.3 L549.9 338.1 L546.4 338.0 L546.1 334.5 L545.5 332.2 L546.5 329.2 L549.6 330.3 L553.2 330.1Z"/>
<path d="M557.4 335.8 L555.6 336.9 L554.1 337.9 L551.4 338.0 L549.9 336.6 L549.3 334.9 L552.0 334.3 L554.3 333.0 L556.3 334.4Z"/>
<path d="M596.5 348.4 L595.8 351.4 L594.0 352.4 L592.3 351.9 L590.6 350.2 L590.3 346.4 L592.0 343.8 L594.0 343.9 L595.3 346.0Z"/>
<path d="M570.3 324.4 L572.0 327.9 L567.9 329.0 L563.8 328.7 L562.8 325.6 L561.9 322.9 L563.6 319.6 L568.0 319.4 L571.0 321.6Z"/>
<path d="M466.6 360.7 L466.1 362.5 L464.3 364.3 L461.9 363.0 L459.8 361.8 L460.0 359.7 L461.3 357.6 L464.3 357.3 L465.9 359.2Z"/>
<path d="M467.0 355.3 L467.0 356.4 L465.0 357.2 L462.1 357.2 L459.5 356.1 L459.3 354.4 L462.9 354.1 L465.2 352.8 L468.2 353.7Z"/>
<path d="M474.8 361.1 L473.8 363.1 L472.5 363.5 L470.9 364.2 L469.8 362.3 L470.0 360.0 L470.9 358.0 L472.5 358.7 L473.3 359.9Z"/>
<path d="M476.0 364.6 L475.8 368.1 L474.0 368.1 L472.4 369.1 L471.0 366.6 L472.0 363.3 L472.5 360.4 L474.2 359.6 L475.4 361.8Z"/>
<path d="M479.2 386.6 L478.8 388.1 L477.8 389.7 L476.0 389.4 L475.2 387.5 L475.8 386.0 L475.9 383.8 L477.8 383.5 L478.8 385.2Z"/>
<path d="M463.8 377.4 L463.6 379.3 L461.5 380.3 L459.4 379.4 L458.3 378.2 L458.1 376.5 L459.8 375.8 L461.3 375.6 L462.5 376.2Z"/>
<path d="M474.4 383.7 L472.4 385.3 L470.1 386.5 L467.2 385.9 L465.1 384.7 L466.1 383.1 L467.8 382.2 L470.3 380.2 L472.4 382.2Z"/>
<path d="M517.2 362.2 L517.6 364.8 L515.3 366.6 L513.1 364.6 L510.8 363.5 L511.4 361.0 L512.6 358.9 L514.9 359.7 L516.4 360.5Z"/>
<path d="M518.1 332.0 L516.6 334.5 L513.4 335.0 L510.6 334.8 L509.5 332.9 L508.1 330.8 L510.8 329.5 L513.6 328.1 L516.4 329.7Z"/>
<path d="M516.9 362.8 L516.1 366.3 L512.7 366.1 L510.9 365.2 L509.3 363.9 L509.3 361.8 L510.8 360.4 L512.6 360.1 L515.3 360.2Z"/>
<path d="M515.3 360.0 L514.1 362.6 L513.0 365.3 L511.1 364.6 L511.1 361.0 L510.3 358.4 L511.5 356.6 L512.8 357.0 L514.7 356.4Z"/>
<path d="M526.7 341.9 L526.5 344.8 L524.3 346.5 L521.2 346.8 L519.8 343.5 L520.4 340.5 L521.8 338.3 L524.1 338.6 L527.3 338.2Z"/>
<path d="M522.8 334.5 L520.2 335.9 L518.5 336.3 L516.6 336.4 L515.0 335.3 L513.7 333.4 L515.7 331.6 L518.8 331.4 L519.9 333.4Z"/>
<path d="M515.9 335.7 L515.2 337.5 L513.7 338.4 L511.8 338.6 L511.9 336.2 L511.8 335.0 L512.0 333.1 L513.8 332.4 L515.1 333.8Z"/>
<path d="M610.9 279.2 L610.7 281.0 L608.1 282.3 L605.6 280.9 L603.7 280.0 L603.8 278.4 L605.6 277.4 L607.9 276.5 L609.7 277.8Z"/>
<path d="M614.0 275.3 L613.2 276.3 L612.1 277.6 L610.5 276.5 L608.2 276.1 L609.3 274.8 L610.5 274.1 L612.2 272.7 L613.4 274.3Z"/>
<path d="M611.2 270.5 L609.8 273.2 L606.7 274.7 L604.2 272.6 L602.0 271.6 L602.9 269.6 L603.0 266.7 L606.7 266.3 L609.3 268.1Z"/>
<path d="M609.0 284.2 L607.6 285.5 L605.4 287.0 L602.0 286.2 L599.4 285.1 L601.0 283.7 L602.4 282.7 L604.9 282.7 L608.6 282.6Z"/>
<path d="M622.5 283.0 L620.8 284.9 L619.6 288.0 L617.4 285.9 L615.8 284.3 L616.3 281.9 L617.4 280.0 L619.6 278.0 L621.2 280.6Z"/>
<path d="M612.2 285.2 L612.1 288.0 L609.7 289.0 L606.4 290.1 L606.3 286.3 L603.9 283.2 L607.6 282.5 L609.9 279.6 L612.5 282.0Z"/>
<path d="M601.3 381.6 L601.1 383.9 L598.6 384.6 L596.3 384.2 L595.0 382.6 L594.5 380.5 L595.3 377.4 L599.0 376.9 L602.1 378.6Z"/>
<path d="M601.9 363.2 L601.8 364.5 L600.9 366.1 L599.6 364.6 L598.0 364.1 L598.6 362.5 L598.9 360.5 L600.6 361.7 L602.4 361.4Z"/>
<path d="M590.1 378.2 L589.3 379.3 L588.0 379.7 L586.0 380.7 L585.0 379.0 L585.7 377.5 L586.4 376.2 L588.3 375.1 L589.4 376.9Z"/>
<path d="M593.1 382.0 L590.8 383.7 L588.8 384.8 L585.5 385.8 L583.2 383.4 L584.8 381.0 L586.6 379.7 L588.8 379.4 L592.0 379.4Z"/>
<path d="M598.6 359.2 L597.6 360.9 L596.1 361.7 L594.2 362.1 L592.6 360.4 L592.4 357.9 L594.2 356.3 L596.1 356.7 L597.2 357.8Z"/>
<path d="M594.2 366.9 L593.0 369.6 L591.5 372.0 L590.0 369.6 L587.8 368.8 L588.7 365.6 L589.3 362.2 L591.6 361.5 L593.1 364.1Z"/>
<path d="M623.8 370.8 L624.7 374.4 L622.4 375.1 L620.2 375.6 L619.8 372.1 L620.0 369.6 L620.3 366.1 L622.4 366.8 L623.6 368.6Z"/>
<path d="M598.6 363.6 L598.4 365.6 L597.0 365.5 L595.7 366.1 L595.0 364.5 L594.9 362.5 L596.0 361.7 L597.2 360.2 L598.6 361.2Z"/>
<path d="M606.3 369.1 L604.8 370.9 L603.6 372.8 L601.8 371.7 L600.2 370.4 L601.3 368.3 L601.4 365.5 L603.6 364.9 L605.0 367.0Z"/>
<path d="M397.5 338.0 L396.9 339.9 L395.6 341.0 L394.4 339.7 L392.3 339.3 L393.5 337.1 L394.3 335.9 L395.5 335.8 L396.6 336.4Z"/>
<path d="M400.0 321.5 L398.0 322.6 L396.8 323.4 L394.8 324.1 L394.3 322.2 L394.6 320.9 L394.9 319.1 L397.0 318.9 L398.7 319.8Z"/>
<path d="M420.4 356.0 L417.8 357.7 L416.4 360.5 L413.0 359.6 L412.8 356.8 L412.6 355.1 L413.4 352.8 L416.2 352.4 L418.2 354.0Z"/>
<path d="M422.4 379.8 L422.3 381.5 L420.5 381.8 L418.4 382.4 L416.3 381.0 L417.8 379.1 L418.4 377.2 L420.7 376.5 L421.9 378.4Z"/>
<path d="M434.6 330.2 L433.6 333.2 L430.1 333.4 L427.5 333.1 L424.6 331.7 L425.5 328.9 L427.5 327.3 L430.4 325.5 L433.3 327.4Z"/>
<path d="M400.7 376.8 L399.5 378.7 L397.3 379.9 L394.3 379.8 L390.7 378.4 L391.2 375.3 L393.5 372.8 L397.5 372.5 L401.0 373.9Z"/>
<path d="M422.3 375.2 L422.6 377.4 L421.2 379.5 L419.1 379.0 L418.8 376.2 L418.5 374.2 L419.4 372.1 L421.1 372.3 L422.6 373.1Z"/>
<path d="M415.7 376.8 L415.9 379.3 L413.4 380.8 L411.2 379.1 L409.6 377.8 L407.1 374.9 L410.0 372.6 L413.7 371.5 L416.3 373.9Z"/>
<path d="M418.3 271.8 L417.3 274.8 L414.3 276.5 L412.0 274.0 L409.2 273.2 L410.2 270.7 L411.1 268.1 L414.0 268.7 L416.6 269.3Z"/>
<path d="M402.3 245.9 L401.2 248.0 L399.5 248.3 L398.0 248.5 L397.0 246.9 L396.2 244.6 L398.2 243.8 L399.6 243.5 L401.2 243.9Z"/>
<path d="M396.9 270.1 L397.2 272.5 L395.0 274.7 L392.3 273.2 L391.3 271.1 L390.8 268.9 L392.3 266.9 L394.7 267.4 L396.3 268.4Z"/>
<path d="M417.6 265.4 L417.3 266.5 L415.6 267.3 L413.6 266.9 L412.4 266.0 L412.7 264.9 L413.3 263.6 L415.8 263.0 L417.9 264.0Z"/>
<path d="M425.6 267.4 L424.9 269.8 L422.4 270.0 L419.9 270.8 L418.7 268.6 L418.5 266.3 L420.0 264.3 L422.5 264.2 L424.2 265.6Z"/>
<path d="M419.8 247.0 L419.0 248.3 L417.1 249.6 L414.4 249.1 L412.2 247.9 L413.8 246.4 L414.5 244.9 L417.3 243.7 L419.0 245.6Z"/>
</g>
<path d="M289 240 L310.5 240 L306 261 L300.5 282 L297 305 L292.3 300 L291 320 L289 330 Z" fill="#a3c3f4"/>
<path d="M289 240 L310.5 240 L306 261 L300.5 282 L298 300 L292.3 300 L289 300 Z" fill="#a3c3f4"/>
<path d="M323.3 310.7 L326.5 311.8 L327.6 317.1 L325.5 323.6 L326.5 332.1 L336.2 326.8 L333 333.2 L339.4 340.7 L330.8 339.6 L320.1 350.3 L311.6 357.8 L308.3 364.2 L304 357.8 L309.4 349.3 L320.1 338.5 L322.3 323.6 L321.2 312.8Z" fill="#a3c3f4"/>
<path d="M317 293 L315.8 300 L311.6 321.4 L307.3 342.8 L305.1 360" fill="none" stroke="#a3c3f4" stroke-width="2.4" stroke-linejoin="round"/>
<path d="M303 358 L309 362 L305 368 L300 375 L297 385 L299 388.6 L289 388.6 L289 384 L294 372 Z" fill="#a3c3f4"/>
<path d="M300 370 L292 388.6 L289 388.6 L289 380 Z" fill="#a3c3f4"/>
<path d="M308 364 L312 370 L318 372 L320 378 M316 360 L317 366 L322 362" fill="none" stroke="#a3c3f4" stroke-width="0.7"/>
<g fill="none" stroke="#f8f7f3" stroke-width="0.75" stroke-linejoin="round">
<path d="M316.6 290 L320 282 L330 276 L345 273.3 L365 266 L400 252 L420 244"/>
<path d="M318 305 L330 296 L350 290 L375 285 L400 275 L430 262"/>
<path d="M330.8 357.8 L352.2 351.4 L373.7 351.4 L390 346"/>
<path d="M423 242 L430 270 L438 300 L445 322"/>
<path d="M400 300 L420 320 L440 330 L460 330"/>
<path d="M488 340 L500 330 L520 322 L540 330 L555 322"/>
<path d="M480 260 L500 252 L530 256 L560 250"/>
<path d="M520 322 L525 350 L520 380"/>
<path d="M560 330 L575 326"/>
<path d="M430 345 L420 360 L405 365"/>
<path d="M466 300 L480 310 L470 340"/>
<path d="M540 330 L552 340"/>
</g>
<g fill="none" stroke="#c8c2b5" stroke-width="0.45">
<path d="M580 270 L600 265 L623 270"/>
<path d="M560 300 L575 310 L590 305 L610 320 L623 310"/>
<path d="M510 340 L530 360 L560 370 L590 365"/>
<path d="M340 350 L360 345 L380 350"/>
<path d="M358 312 L365 340 L372 388"/>
<path d="M495 330 L510 345 L500 365 L520 388"/>
<path d="M540 255 L560 265 L570 290 L560 300"/>
<path d="M600 300 L590 330 L610 345"/>
<path d="M470 290 L490 300 L495 320"/>
</g>
<g fill="none" stroke="#f7cd52" stroke-width="1.5" stroke-linejoin="round" stroke-linecap="round">
<path d="M351.3 240 L348.3 263.8 L346 274.5 L350.9 287.6 L358.7 300 L365 306.4 L373.7 317.1 L374.7 325.7 L381.1 334.3 L384.4 347.1 L385.4 364.2 L388 373.9 L390 388.6"/>
<path d="M354.4 368.5 L358.7 365.3 L373.7 364.2 L382.2 367.5 L390 366 L403 365 L425.7 357.6 L435 355.7 L447.6 355.7 L448.6 344.3 L456.2 342.4 L460 329 L461.9 323.3 L456 312 L451.4 289.5 L448.6 268.6 L455.2 259 L463.8 260 L475 266 L489 275.2 L497.6 272.4 L510 285.7 L512.9 301 L515.7 305.7"/>
<path d="M450 345 L454 359 L452.9 371 L450.5 388.6"/>
<path d="M464.8 342.4 L473 349.5 L469.5 361.4 L474.3 373.3 L486 378"/>
<path d="M481.4 292 L467 313.8 L461 326"/>
<path d="M410 368.6 L424.3 369.8"/>
<path d="M455.2 259 L452 250 L450 240"/>
<path d="M461.9 332.9 L465.7 348.1 L471.4 351.9 L467.6 365.2 L475.7 367.1 L479.5 374.8 L480 388.6"/>
<path d="M425.7 372.9 L429.5 371 L440 370 L445 372 L440 388.6"/>
<path d="M515.7 305.7 L527.1 285.7 L536.7 278.1 L548.1 262.9 L561.4 261.9 L569 252.4 L571.9 240"/>
<path d="M578.6 240 L586.2 243.8"/>
<path d="M515.7 305.7 L522 304 L528 307 L532.9 305.7 L537 303 L542.4 304.8 L548 306 L553.8 307.6 L557.6 315.7 L554 318 L551.9 320.5 L556 324 L559.5 331 L557 334 L561.4 340.5 L565.2 346.2 L568 351 L574.8 353.8 L578 357 L582.4 354.8 L587.1 361.4 L593 360 L599.5 363.3 L603 366 L607.1 367.1 L615 364 L623.3 366.2"/>
<path d="M478.6 295.2 L480.5 310.5 L487.1 316.2 L492 318"/>
<path d="M470 302.9 L477.6 299"/>
<path d="M289 355 L292 352"/>
</g>
<g fill="none" stroke="#f59a22" stroke-width="1.7" stroke-linejoin="round">
<path d="M354.7 240 L369.8 262.6 L377 275 L378.3 280 L384.9 308.8 L394 342.8 L391.4 363.8 L390.1 374.2 L394 388.6"/>
<path d="M385.8 240 L385 262.6 L391.4 280 L392.7 306.2 L399.3 340.2 L400.6 363.8 L403.2 388.6"/>
<path d="M476.7 240 L484.3 264.8 L491 278.1 L489 287.6 L480.5 295.2 L478.6 301"/>
</g>
<rect x="366.8" y="265" width="11.5" height="5.4" fill="#3a78d4" rx="0.6"/>
<text x="372.5" y="269.4" font-size="4.8" fill="#fff" text-anchor="middle" font-weight="bold">A29</text>
<rect x="384.6" y="266.8" width="8" height="5.1" fill="#4a9a3a" rx="0.6"/>
<text x="388.6" y="271" font-size="4.6" fill="#fff" text-anchor="middle" font-weight="bold">E1</text>
<g>
<rect x="347.7" y="255.5" width="9" height="5.3" fill="#fff" stroke="#8e8e8e" stroke-width="0.5"/>
<text x="352.2" y="259.8" font-size="4.56" fill="#333" text-anchor="middle">109</text>
<rect x="307" y="296.8" width="16.2" height="5.7" fill="#fff" stroke="#8e8e8e" stroke-width="0.5"/>
<text x="315.1" y="301.5" font-size="5.10" fill="#333" text-anchor="middle">N327</text>
<rect x="303.4" y="321" width="14.6" height="5.8" fill="#fff" stroke="#8e8e8e" stroke-width="0.5"/>
<text x="310.7" y="325.7" font-size="5.10" fill="#333" text-anchor="middle">N327</text>
<rect x="364.2" y="310" width="14.3" height="5.2" fill="#fff" stroke="#8e8e8e" stroke-width="0.5"/>
<text x="371.3" y="314.4" font-size="5.10" fill="#333" text-anchor="middle">N109</text>
<rect x="398" y="261.9" width="13.4" height="5.7" fill="#fff" stroke="#8e8e8e" stroke-width="0.5"/>
<text x="404.7" y="266.6" font-size="5.02" fill="#333" text-anchor="middle">N327</text>
<rect x="457.1" y="323.3" width="10.5" height="5.7" fill="#fff" stroke="#8e8e8e" stroke-width="0.5"/>
<text x="462.4" y="328.0" font-size="5.10" fill="#333" text-anchor="middle">IC2</text>
<rect x="432.4" y="350" width="15.2" height="6.7" fill="#fff" stroke="#8e8e8e" stroke-width="0.5"/>
<text x="440.0" y="355.2" font-size="5.10" fill="#333" text-anchor="middle">N224</text>
<rect x="424.8" y="366.2" width="20" height="5.7" fill="#fff" stroke="#8e8e8e" stroke-width="0.5"/>
<text x="434.8" y="370.9" font-size="5.10" fill="#333" text-anchor="middle">N224-3</text>
<rect x="498.6" y="260" width="18.1" height="4.8" fill="#fff" stroke="#8e8e8e" stroke-width="0.5"/>
<text x="507.7" y="264.2" font-size="5.09" fill="#333" text-anchor="middle">N224-1</text>
<rect x="564.3" y="252.4" width="15.2" height="5.7" fill="#fff" stroke="#8e8e8e" stroke-width="0.5"/>
<text x="571.9" y="257.1" font-size="5.10" fill="#333" text-anchor="middle">N224</text>
<rect x="488.1" y="314.9" width="13.3" height="4.7" fill="#fff" stroke="#8e8e8e" stroke-width="0.5"/>
<text x="494.8" y="319.0" font-size="4.98" fill="#333" text-anchor="middle">N224</text>
<rect x="519.9" y="372.9" width="13" height="4.7" fill="#fff" stroke="#8e8e8e" stroke-width="0.5"/>
<text x="526.4" y="377.0" font-size="4.85" fill="#333" text-anchor="middle">N328</text>
<rect x="471" y="375.1" width="16.1" height="5" fill="#fff" stroke="#8e8e8e" stroke-width="0.5"/>
<text x="479.1" y="379.4" font-size="5.10" fill="#333" text-anchor="middle">N16-3</text>
</g>
<g font-size="6.4" fill="#4d4d4d" text-anchor="middle" stroke="#f6f4f0" stroke-width="1.2" stroke-opacity="0.75" paint-order="stroke">
<text x="354" y="251.4">arada</text>
<text x="340.9" y="296.0">Ovar</text>
<text x="376" y="322.6">Válega</text>
<text x="384.5" y="350.2">Avanca</text>
<text x="344.2" y="364.5">Pardilhó</text>
<text x="394.8" y="377.8">Beduído</text>
<text x="412.8" y="287.4">São Vicente</text>
<text x="412.8" y="293.1">de Pereira Jusã</text>
<text x="444.8" y="250.7">São João</text>
<text x="446.2" y="258.3">da Madeira</text>
<text x="440" y="241.6">Arrifana</text>
<text x="456.2" y="314.1">Oliveira de</text>
<text x="453.7" y="320.6">Azeméis</text>
<text x="438" y="335.0">Ul</text>
<text x="479.5" y="264.0">Nogueira</text>
<text x="479.5" y="269.7">do Cravo</text>
<text x="507.6" y="294.5">Codal</text>
<text x="518.5" y="309.7">Vale de</text>
<text x="518.5" y="316.4">Cambra</text>
<text x="547.2" y="303.1">Roge</text>
<text x="491.4" y="329.2">Ossela</text>
<text x="526.7" y="370.6">Dornelas</text>
<text x="565.2" y="353.1">Junqueira</text>
<text x="596.2" y="357.8">Arões</text>
<text x="551" y="250.1">Chave</text>
<text x="590" y="248.8">Rossas</text>
</g>
<text x="292" y="386" font-size="3.8" fill="#5a6a88" transform="rotate(-58 292 386)">Ria de Aveiro</text>
<path d="M456.2 312.4 L451.8 303 A5.8 5.8 0 1 1 460.6 303 Z" fill="#e5423b"/>
<path d="M456.2 312.4 L451.8 303 A5.8 5.8 0 0 1 456.2 294.2 Z" fill="#ef5a52" opacity="0.5"/>
<circle cx="456.2" cy="299.8" r="1.2" fill="#6b1410"/>
<rect x="294" y="246" width="53" height="15.2" fill="#fff"/>
<text x="298.7" y="255.4" font-size="5.8" fill="#222">Mapa</text>
<text x="321.9" y="255.4" font-size="5.8" fill="#666">Satélite</text>
<rect x="603" y="326.8" width="15.2" height="14.6" fill="#fff"/>
<circle cx="610.6" cy="330.4" r="1.3" fill="#f3a61a"/>
<path d="M608.6 332.2 h4 l0.4 4 h-1.2 l-0.2 3 h-2 l-0.2 -3 h-1.2z" fill="#f3a61a"/>
<rect x="603" y="347.1" width="15.2" height="28.6" fill="#fff"/>
<rect x="606" y="361.2" width="9" height="0.5" fill="#e6e6e6"/>
<path d="M608.1 354.4 h5 M610.6 351.9 v5 M608.1 368.5 h5" stroke="#555" stroke-width="1.1"/>
<rect x="414" y="382.2" width="209.3" height="6.6" fill="#f5f3ef" opacity="0.7"/>
<g font-size="5.3" fill="#555">
<text x="419.5" y="387.3">Dados do mapa ©2016 Google</text>
<text x="498.5" y="387.3">Termos de Utilização</text>
<text x="553" y="387.3">Comunicar um erro no mapa</text>
</g>
<g font-size="10" stroke="#fff" stroke-width="1" paint-order="stroke"><text x="292.4" y="384.6"><tspan fill="#4285f4">G</tspan><tspan fill="#ea4335">o</tspan><tspan fill="#fbbc05">o</tspan><tspan fill="#4285f4">g</tspan><tspan fill="#34a853">l</tspan><tspan fill="#ea4335">e</tspan></text></g>
</svg>
<!-- scroll arrows -->
<svg class="a" style="left:623px;top:240px" width="10" height="149" viewBox="623 240 10 149">
 <path d="M625.3 253.6 L627.9 250.9 L630.5 253.6" fill="none" stroke="#a6a6a6" stroke-width="0.9"/>
 <path d="M625.3 376.2 L627.9 378.9 L630.5 376.2" fill="none" stroke="#a6a6a6" stroke-width="0.9"/>
</svg>


<!-- bottom buttons -->
<div class="btn" style="left:514.3px;top:397.7px;width:38.3px;height:11.1px;line-height:9.5px"><span>Aplicar</span></div>
<div class="btn" style="left:557.3px;top:397.7px;width:38.5px;height:11.1px;line-height:9.5px"><span>OK</span></div>
<div class="btn" style="left:600.2px;top:397.7px;width:38.8px;height:11.1px;line-height:9.5px"><span>Cancelar</span></div>
</body></html>
